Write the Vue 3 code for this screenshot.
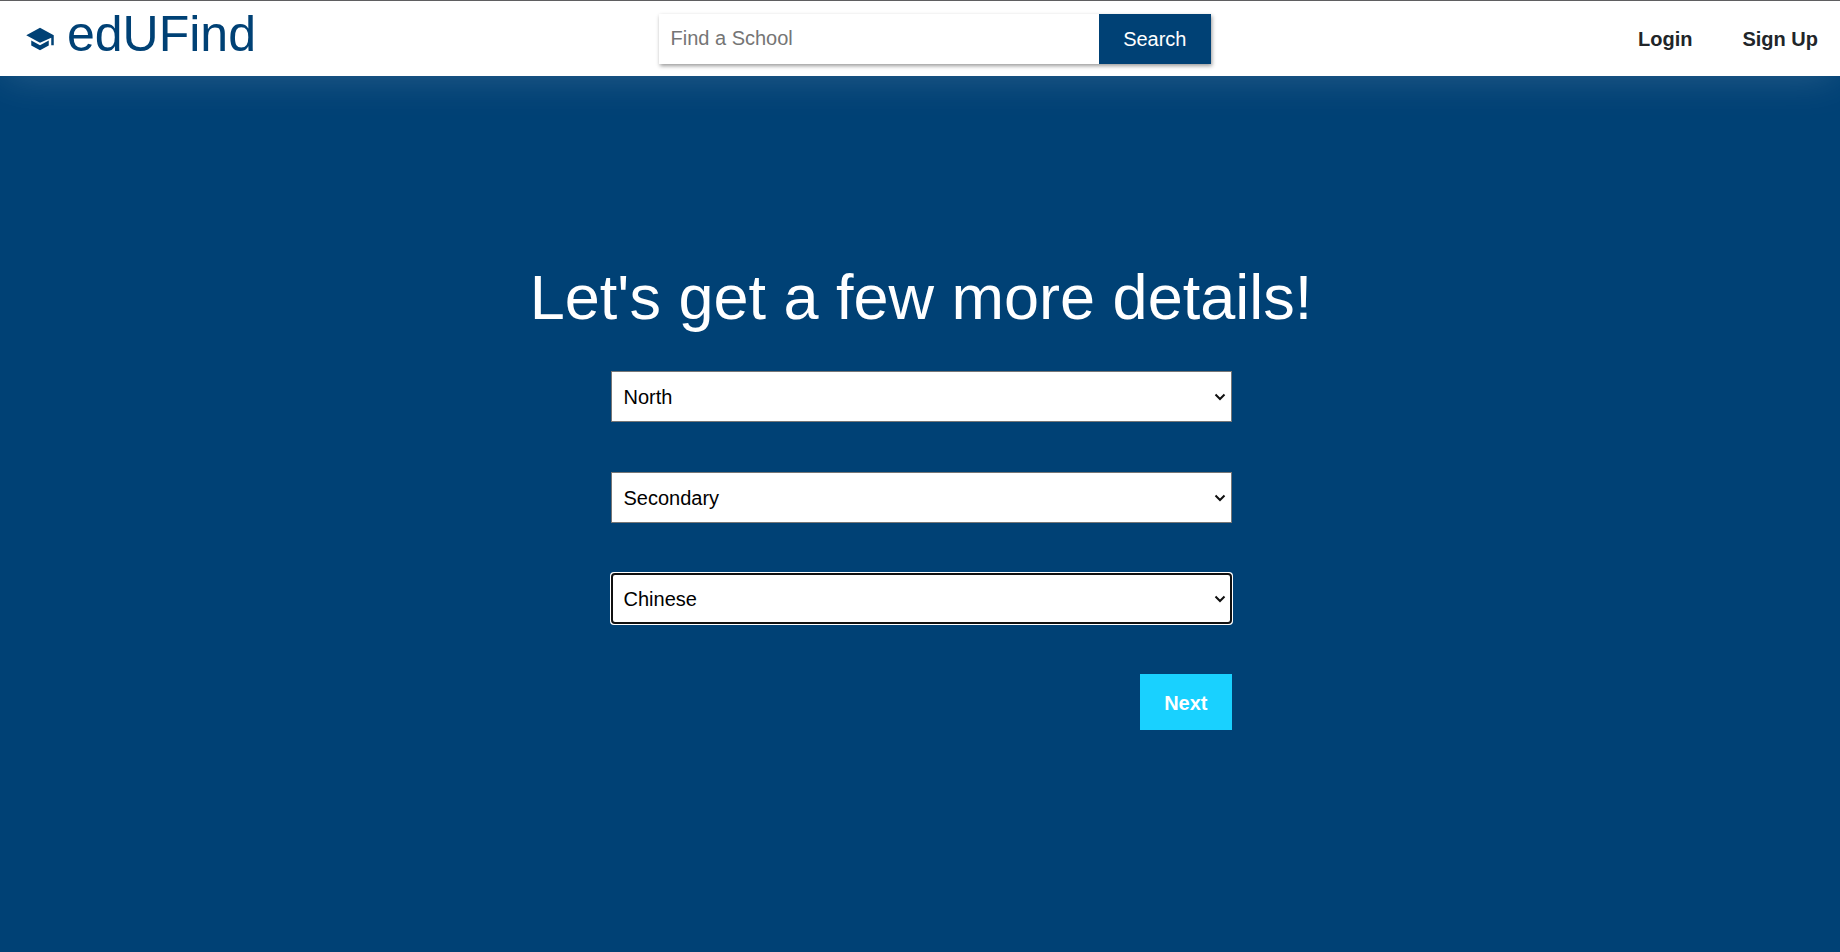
<script setup>
import { onMounted, ref } from 'vue'

const query = ref('')
const fields = ref([
  { label: 'Region', value: 'North', options: ['North', 'South', 'East', 'West'] },
  { label: 'School level', value: 'Secondary', options: ['Primary', 'Secondary', 'Junior College'] },
  { label: 'Language', value: 'Chinese', options: ['Chinese', 'Malay', 'Tamil'] },
])
const selects = ref([])

onMounted(() => selects.value[fields.value.length - 1].focus())
</script>

<template>
  <div class="page">
    <header class="topbar">
      <a class="brand" href="#">
        <svg class="brand-icon" viewBox="0 0 24 24" aria-hidden="true">
          <path d="M5 13.18v4L12 21l7-3.82v-4L12 17l-7-3.82zM12 3 1 9l11 6 9-4.09V17h2V9L12 3z" />
        </svg>
        <span class="brand-name">edUFind</span>
      </a>
      <form class="search" @submit.prevent>
        <input v-model="query" class="search-input" type="text" placeholder="Find a School" aria-label="Find a School" />
        <button class="search-button" type="submit">Search</button>
      </form>
      <nav class="links">
        <a href="#">Login</a>
        <a href="#">Sign Up</a>
      </nav>
    </header>

    <main class="content">
      <h1>Let's get a few more details!</h1>
      <form class="details" @submit.prevent>
        <div v-for="field in fields" :key="field.label" class="field">
          <select ref="selects" v-model="field.value" :aria-label="field.label">
            <option v-for="item in field.options" :key="item">{{ item }}</option>
          </select>
          <svg class="chevron" viewBox="0 0 12 8" aria-hidden="true">
            <path d="M1.5 1.5 6 6l4.500-4.500" />
          </svg>
        </div>
        <button class="next" type="submit">Next</button>
      </form>
    </main>
  </div>
</template>

<style>
body {
  background: #004175;
}
</style>

<style scoped>
.page {
  min-height: 100vh;
  background: #004175;
  font-family: "Liberation Sans", Arial, sans-serif;
  font-size: 20px;
}

.page * {
  box-sizing: border-box;
}

.topbar {
  display: flex;
  align-items: center;
  justify-content: space-between;
  height: 76px;
  padding: 0 22px 0 25px;
  border-top: 1px solid #5f5f61;
  background: #fff;
  box-shadow: 0 5px 40px -5px rgba(255, 255, 255, 0.17);
}

.brand {
  display: flex;
  align-items: center;
  gap: 12px;
  color: #004175;
  text-decoration: none;
}

.brand-icon {
  width: 30px;
  height: 30px;
  fill: currentColor;
}

.brand-name {
  padding-bottom: 10px;
  font-size: 50px;
  line-height: 56px;
}

.search {
  display: flex;
  width: 30vw;
  height: 50px;
  box-shadow: 1px 2px 4px rgba(0, 0, 0, 0.4);
}

.search-input {
  flex: 1;
  min-width: 0;
  padding: 0 12px;
  border: 0;
  background: #fff;
  font: inherit;
}

.search-input::placeholder {
  color: #757575;
}

.search-button {
  padding: 2px 24px 0;
  border: 0;
  background: #004175;
  color: #fff;
  font: inherit;
}

.links {
  display: flex;
  gap: 50px;
  padding: 2px 0 0 25px;
}

.links a {
  color: #212529;
  font-weight: bold;
  text-decoration: none;
}

.content {
  display: flex;
  flex-direction: column;
  align-items: center;
  padding: 184px 0 0 2px;
}

h1 {
  margin: 0 0 36px;
  color: #fff;
  font-size: 63px;
  font-weight: normal;
  line-height: 75px;
}

.details {
  display: flex;
  flex-direction: column;
  gap: 50px;
  width: 100%;
  max-width: 621px;
}

.field {
  position: relative;
}

.field select {
  display: block;
  width: 100%;
  height: 51px;
  padding: 0 24px 0 12px;
  border: 1px solid #767676;
  border-radius: 0;
  appearance: none;
  background: #fff;
  color: #000;
  font: inherit;
}

.field select:focus {
  outline: -webkit-focus-ring-color auto 1px;
}

.chevron {
  position: absolute;
  top: 22px;
  right: 6px;
  width: 12px;
  height: 8px;
  fill: none;
  stroke: #101010;
  stroke-width: 2;
  pointer-events: none;
}

.next {
  align-self: flex-end;
  height: 56px;
  padding: 2px 24px 0;
  border: 0;
  background: #19d1ff;
  color: #fff;
  font: inherit;
  font-weight: bold;
}
</style>
